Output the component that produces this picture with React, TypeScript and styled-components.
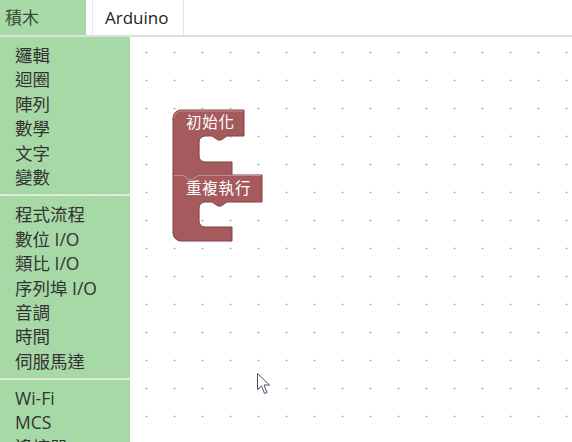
import styled, { createGlobalStyle } from "styled-components";

const GlobalStyle = createGlobalStyle`
  html, body {
    margin: 0;
    padding: 0;
    background: #fff;
    overflow: hidden;
  }
`;

const Page = styled.div`
  width: 572px;
  height: 442px;
  display: flex;
  flex-direction: column;
  overflow: hidden;
  font-family: "Open Sans", "Noto Sans CJK TC", sans-serif;
  color: #333;
`;

const TabBar = styled.div`
  height: 35px;
  display: flex;
  border-top: 1px dotted #e2e2e2;
  border-bottom: 2px solid #dedede;
  box-sizing: content-box;
  margin-top: -1px;
`;

type TabProps = {
  $active?: boolean,
}

const Tab = styled.div<TabProps>`
  box-sizing: border-box;
  height: 35px;
  line-height: 35px;
  font-size: 17px;
  width: ${(p) => (p.$active ? "86px" : "92px")};
  padding-left: ${(p) => (p.$active ? "5px" : "12px")};
  margin-left: ${(p) => (p.$active ? "0" : "6px")};
  background: ${(p) => (p.$active ? "#a8daa8" : "#fff")};
  border-left: ${(p) => (p.$active ? "none" : "1px dotted #d6d6d6")};
  border-right: ${(p) => (p.$active ? "none" : "1px solid #e2e2e2")};
  color: ${(p) => (p.$active ? "#3a4a3a" : "#222")};
`;

const Main = styled.div`
  flex: 1;
  position: relative;
  display: flex;
  overflow: hidden;
`;

const Grid = styled.svg`
  position: absolute;
  inset: 0;
  width: 100%;
  height: 100%;
  z-index: 0;
`;

const Toolbox = styled.div`
  position: relative;
  z-index: 1;
  width: 130px;
  flex-shrink: 0;
  padding-top: 6px;
  background: rgba(160, 214, 160, 0.92);
  overflow: hidden;
`;

const Category = styled.div`
  height: 24.4px;
  line-height: 24.4px;
  padding-left: 15px;
  font-size: 17.5px;
  color: #333;
  white-space: nowrap;
`;

const Separator = styled.div`
  height: 2px;
  margin: 5px 0 6px;
  background: #dcefdc;
`;

const Canvas = styled.div`
  position: relative;
  z-index: 1;
  flex: 1;
`;

const BlockGroup = styled.svg`
  position: absolute;
  left: 40px;
  top: 68px;
  width: 100px;
  height: 140px;
  overflow: visible;
`;

const BlockLabel = styled.text`
  fill: #fff;
  font-family: "Noto Sans CJK TC", sans-serif;
  font-size: 15.5px;
  letter-spacing: 0.8px;
`;

const Cursor = styled.svg`
  position: absolute;
  left: 127px;
  top: 336px;
  width: 16px;
  height: 22px;
  overflow: visible;
`;

const groups = [
  ["邏輯", "迴圈", "陣列", "數學", "文字", "變數"],
  ["程式流程", "數位 I/O", "類比 I/O", "序列埠 I/O", "音調", "時間", "伺服馬達"],
  ["Wi-Fi", "MCS", "遙控器"],
];

const blockPath =
  "M173,118 A8,8 0 0 1 181,110 H244 V136 H227 l-6,4 h-3 l-6,-4 H205 " +
  "A6,6 0 0 0 199,142 V156 A6,6 0 0 0 205,162 H232 V175 H262 V202 " +
  "H227 l-6,4 h-3 l-6,-4 H205 A6,6 0 0 0 199,208 V221 A6,6 0 0 0 205,227 " +
  "H232 V241 H181 A8,8 0 0 1 173,233 Z";

const highlight = "#c38c8e";

function Blocks() {
  return (
    <BlockGroup viewBox="170 105 100 140">
      <path d={blockPath} fill="#a55b5d" stroke="#7f4345" strokeWidth="1" />
      <path d="M174,118 A7,7 0 0 1 181,111 H243" fill="none" stroke={highlight} />
      <path d="M174,175.5 H183 l6,4 h3 l6,-4 H261" fill="none" stroke={highlight} />
      <path d="M199.5,143 V156" fill="none" stroke={highlight} />
      <path d="M199.5,209 V221" fill="none" stroke={highlight} />
      <BlockLabel x="186" y="128">初始化</BlockLabel>
      <BlockLabel x="186" y="194">重複執行</BlockLabel>
    </BlockGroup>
  );
}

export default function App() {
  return (
    <Page>
      <GlobalStyle />
      <TabBar>
        <Tab $active>積木</Tab>
        <Tab>Arduino</Tab>
      </TabBar>
      <Main>
        <Grid>
          <defs>
            <pattern id="dots" width="28" height="28" patternUnits="userSpaceOnUse">
              <rect x="5" y="15" width="3" height="1" fill="#d6d6d6" />
              <rect x="6" y="14" width="1" height="3" fill="#d6d6d6" />
              <rect x="6" y="15" width="1" height="1" fill="#bdbdbd" />
            </pattern>
          </defs>
          <rect width="100%" height="100%" fill="url(#dots)" />
        </Grid>
        <Toolbox>
          {groups.map((items, i) => (
            <div key={i}>
              {i > 0 && <Separator />}
              {items.map((name) => (
                <Category key={name}>{name}</Category>
              ))}
            </div>
          ))}
        </Toolbox>
        <Canvas>
          <Blocks />
          <Cursor viewBox="0 0 16 22">
            <path
              d="M0.5,0.5 V16.5 L4.5,13 L7.5,20.5 L10,19.5 L7,12 L12.5,12 Z"
              fill="#fff"
              stroke="#4a4f66"
              strokeWidth="1"
            />
          </Cursor>
        </Canvas>
      </Main>
    </Page>
  );
}
